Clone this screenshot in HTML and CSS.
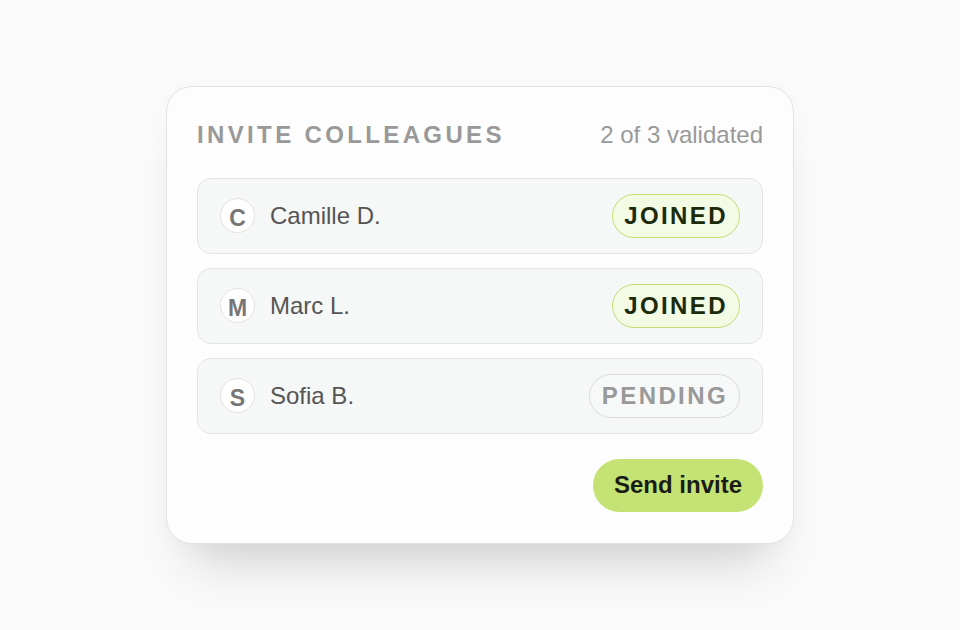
FILE: index.html
```html
<!DOCTYPE html>
<html lang="en">
<head>
  <meta charset="UTF-8"/>
  <meta name="viewport" content="width=device-width, initial-scale=1.0"/>
  <title>Invite colleagues</title>
  <link rel="stylesheet" href="styles.css">
</head>
<body>
  <div class="card">
    <div class="card-head">
      <h1>Invite colleagues</h1>
      <span class="count">2 of 3 validated</span>
    </div>

    <ul class="people">
      <li class="person">
        <span class="avatar">C</span>
        <span class="name">Camille D.</span>
        <span class="badge joined">Joined</span>
      </li>
      <li class="person">
        <span class="avatar">M</span>
        <span class="name">Marc L.</span>
        <span class="badge joined">Joined</span>
      </li>
      <li class="person">
        <span class="avatar">S</span>
        <span class="name">Sofia B.</span>
        <span class="badge pending">Pending</span>
      </li>
    </ul>

    <div class="actions">
      <button class="send">Send invite</button>
    </div>
  </div>
</body>
</html>
```

FILE: styles.css
```css
* { box-sizing: border-box; margin: 0; padding: 0; }
html, body { height: 100%; }
body {
  font-family: 'Liberation Sans', Arial, sans-serif;
  background: #fafafa; color: #555;
  display: flex; align-items: center; justify-content: center;
}
.card {
  width: 628px;
  background: #fdfdfd;
  border: 1px solid #e3e3e3;
  border-radius: 26px;
  padding: 34px 30px 31px;
  box-shadow: 0 42px 48px -26px rgba(0,0,0,.17), 0 6px 30px rgba(0,0,0,.02);
}
.card-head {
  display: flex; justify-content: space-between; align-items: center;
  line-height: 1.2; margin-bottom: 28px;
}
.card-head h1 {
  font-size: 24px; font-weight: 700; text-transform: uppercase;
  letter-spacing: .14em; color: #999;
}
.count { font-size: 24px; color: #999; }
.people { list-style: none; display: flex; flex-direction: column; gap: 14px; }
.person {
  height: 76px;
  display: flex; align-items: center; gap: 15px;
  padding: 0 22px;
  background: #f6f7f7;
  border: 1px solid #e3e4e4;
  border-radius: 14px;
}
.avatar {
  width: 35px; height: 35px; border-radius: 50%;
  background: #fff; border: 1px solid #e2e2e2;
  display: flex; align-items: center; justify-content: center;
  font-size: 23px; font-weight: 700; color: #777;
  padding-top: 5px;
}
.name { font-size: 24px; color: #555; flex: 1; }
.badge {
  height: 44px; padding: 0 11px 0 11.5px;
  display: flex; align-items: center;
  border-radius: 22px;
  font-size: 24px; font-weight: 700; text-transform: uppercase;
  letter-spacing: .1em;
}
.joined { background: #f3fbe4; border: 1.5px solid #bfdf72; color: #1b2a08; }
.pending { background: #f7f8f8; border: 1.5px solid #dcdcdc; color: #999; }
.actions { display: flex; justify-content: flex-end; margin-top: 25px; }
.send {
  height: 53px; padding: 0 21px;
  border: none; border-radius: 27px;
  background: #c5e274; color: #1a1d17;
  font-family: inherit; font-size: 24px; font-weight: 700;
  cursor: pointer;
}
```
